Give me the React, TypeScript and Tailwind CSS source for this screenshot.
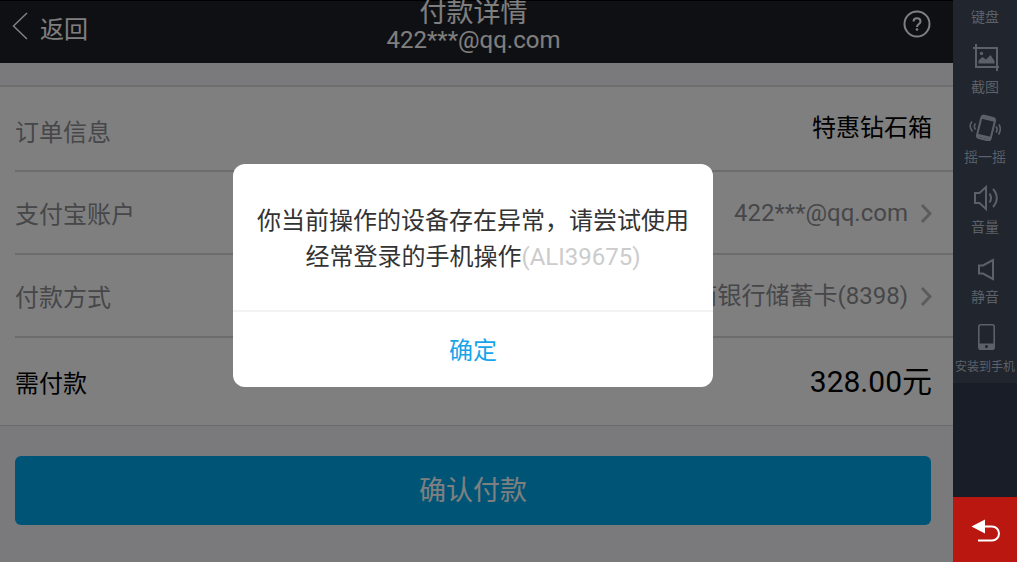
import React from 'react';

const rows = [
  { label: '支付宝账户', value: '422***@qq.com' },
  { label: '付款方式', value: '招商银行储蓄卡(8398)' },
];

function ChevronRight() {
  return (
    <svg className="h-5 w-3" viewBox="0 0 12 20" fill="none" stroke="#b8b8bc" strokeWidth="3">
      <path d="M2 2 10 10.500 2 19" />
    </svg>
  );
}

function ScreenshotIcon() {
  return (
    <svg className="h-7 w-8" viewBox="0 0 32 28" fill="none" stroke="currentColor" strokeWidth="2">
      <path d="M7 1v23h23M4 5h24v23" />
      <circle cx="12.500" cy="10.500" r="1.700" fill="currentColor" stroke="none" />
      <path d="M9.500 20.500v-3l4-3.500 3.500 2.500 4.500-4.500 4 6v2.500z" fill="currentColor" stroke="none" />
    </svg>
  );
}

function ShakeIcon() {
  return (
    <svg className="h-7 w-8" viewBox="0 0 32 28" fill="none" stroke="currentColor" strokeWidth="2">
      <g transform="rotate(14 17 15)">
        <rect x="10" y="3.500" width="14" height="23" rx="2.500" />
        <path d="M10.500 5.500h13M10.500 24h13" strokeWidth="3" />
      </g>
      <path d="M6.500 10.500c-1.500 2-1.500 4 0 6M3 8.500c-2.500 3-2 7 .500 10" strokeWidth="1.600" />
      <path d="M27 13.500c1.500 2 1.500 4 0 6M30 11.500c2 3.500 1.500 7-.500 10" strokeWidth="1.600" />
    </svg>
  );
}

function VolumeIcon() {
  return (
    <svg className="h-7 w-8" viewBox="0 0 32 28" fill="none" stroke="currentColor" strokeWidth="2">
      <path d="M6 10h4.500L17 4v22l-6.500-6H6z" />
      <path d="M20.500 10.500c2 3 2 6 0 9M24 6c5 5.500 5 12.500 0 18" />
    </svg>
  );
}

function MuteIcon() {
  return (
    <svg className="h-7 w-8" viewBox="0 0 32 28" fill="none" stroke="currentColor" strokeWidth="2">
      <path d="M10 12.500h4L24 7v19l-10-5.500h-4z" />
    </svg>
  );
}

function PhoneIcon() {
  return (
    <svg className="h-7 w-8" viewBox="0 0 32 28" fill="none" stroke="currentColor" strokeWidth="1.600">
      <rect x="9.800" y="1.800" width="15.400" height="24.400" rx="2" />
      <path d="M9.500 20.500h16V24a2.500 2.500 0 0 1-2.500 2.500H12A2.500 2.500 0 0 1 9.500 24z" fill="currentColor" stroke="none" />
      <circle cx="17.500" cy="23.500" r="1.500" fill="#20252e" stroke="none" />
    </svg>
  );
}

const tools = [
  { label: '截图', icon: <ScreenshotIcon /> },
  { label: '摇一摇', icon: <ShakeIcon /> },
  { label: '音量', icon: <VolumeIcon /> },
  { label: '静音', icon: <MuteIcon /> },
  { label: '安装到手机', icon: <PhoneIcon />, small: true },
];

function Header() {
  return (
    <header className="grid h-[63px] grid-cols-[1fr_auto_1fr] items-start border-t border-black bg-[#1f2129] pr-[22px] pl-3 text-white">
      <button className="flex items-start gap-3 pt-[11px]">
        <svg className="h-7 w-4" viewBox="0 0 16 28" fill="none" stroke="currentColor" strokeWidth="1.500">
          <path d="M15 1 1.500 14 15 27" />
        </svg>
        <span className="pt-0.5 text-2xl leading-8">返回</span>
      </button>
      <div className="pl-1 text-center">
        <h1 className="text-[27px] leading-6">付款详情</h1>
        <p className="text-2xl leading-[30px]">422***@qq.com</p>
      </div>
      <button aria-label="帮助" className="justify-self-end pt-[9px]">
        <svg className="h-7 w-7" viewBox="0 0 28 28" fill="none" stroke="currentColor" strokeWidth="2">
          <circle cx="14" cy="14" r="12.500" />
          <path d="M10.500 11.500c0-4.500 7-4.500 7 0 0 2.500-3.500 2.500-3.500 5.500" />
          <circle cx="14" cy="19.500" r="1.300" fill="currentColor" stroke="none" />
        </svg>
      </button>
    </header>
  );
}

function Dialog() {
  return (
    <div className="absolute inset-0 flex items-center justify-center bg-black/50 pr-[7px] pb-[11px]">
      <div role="alertdialog" aria-modal="true" className="w-[480px] rounded-xl bg-white">
        <p className="px-6 pt-[39px] pb-[35px] text-center text-2xl leading-9 text-[#333]">
          你当前操作的设备存在异常，请尝试使用经常登录的手机操作
          <span className="text-[#ccc]">(ALI39675)</span>
        </p>
        <button className="h-[77px] w-full border-t-2 border-[#f3f3f3] pt-0.5 text-2xl text-[#16a5e9]">确定</button>
      </div>
    </div>
  );
}

function Sidebar() {
  return (
    <aside className="flex w-16 shrink-0 flex-col bg-[#191d27] text-sm text-[#5c6169]">
      <div className="bg-[#20252e]">
        <button className="block h-[33px] w-full leading-5">键盘</button>
        {tools.map((tool) => (
          <button key={tool.label} className="flex h-[70px] w-full flex-col items-center gap-1.5 pt-2.5">
            {tool.icon}
            <span className={tool.small ? 'text-xs leading-5 whitespace-nowrap' : 'leading-5'}>{tool.label}</span>
          </button>
        ))}
      </div>
      <button aria-label="后退" className="mt-auto flex h-[65px] items-center justify-center bg-[#b9170f] text-white">
        <svg className="h-7 w-8" viewBox="0 0 32 28" fill="none" stroke="currentColor" strokeWidth="2">
          <path d="M14 10.500h9a7 7 0 0 1 0 14H9" />
          <path d="M2.500 10.500 16 3.500v14z" fill="currentColor" stroke="none" />
        </svg>
      </button>
    </aside>
  );
}

export default function App() {
  return (
    <div className="flex min-h-screen font-[Roboto,'Noto_Sans_CJK_SC',sans-serif]">
      <div className="relative min-w-0 flex-1 bg-[#f4f4f8]">
        <Header />
        <main>
          <section className="mt-[22px] border-t-2 border-b border-[#dedee0] border-b-[#d4d4d6] bg-white pl-[15px] text-2xl">
            <div className="flex h-[85px] items-center justify-between border-b-2 border-[#d8d8da] pr-[21px]">
              <span className="pt-2 text-[#8e8e93]">订单信息</span>
              <span className="pb-0.5 text-black">特惠钻石箱</span>
            </div>
            {rows.map((row) => (
              <div key={row.label} className="flex h-[83px] items-center justify-between border-b-2 border-[#d8d8da] pr-[21px]">
                <span className="pt-1 text-[#8e8e93]">{row.label}</span>
                <span className="flex items-center gap-3 text-[#8e8e93]">
                  {row.value}
                  <ChevronRight />
                </span>
              </div>
            ))}
            <div className="flex h-[87px] items-center justify-between pr-[21px] text-black">
              <span className="pt-1">需付款</span>
              <span className="text-3xl">328.00元</span>
            </div>
          </section>
          <div className="mt-[30px] pr-[22px] pl-[15px]">
            <button className="h-[69px] w-full rounded-md bg-[#00aaee] pt-0.5 text-[27px] text-white">确认付款</button>
          </div>
        </main>
        <Dialog />
      </div>
      <Sidebar />
    </div>
  );
}
